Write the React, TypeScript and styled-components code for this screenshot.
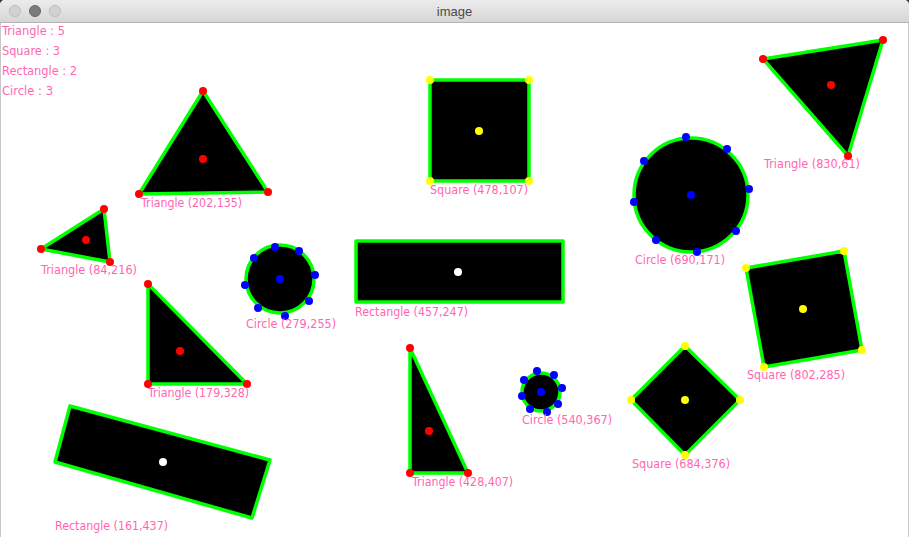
import React from "react";
import styled, { createGlobalStyle } from "styled-components";

const Global = createGlobalStyle`
  html, body { margin: 0; padding: 0; background: #3b3548; overflow: hidden; }
  #root { width: 909px; height: 537px; }
`;

const Window = styled.div`
  width: 909px;
  height: 537px;
  display: flex;
  flex-direction: column;
  background: #ffffff;
  border-radius: 5px 5px 0 0;
  overflow: hidden;
  box-sizing: border-box;
`;

const TitleBar = styled.div`
  height: 22px;
  flex: 0 0 22px;
  border-bottom: 1px solid #b4b4b4;
  background: linear-gradient(#ececec, #d6d6d6);
  display: flex;
  align-items: center;
  position: relative;
  padding-left: 9px;
  box-sizing: content-box;
`;

const Lights = styled.div`
  display: flex;
  gap: 8px;
`;

const Light = styled.span<{ $dark?: boolean }>`
  width: 12px;
  height: 12px;
  border-radius: 50%;
  box-sizing: border-box;
  background: ${(p) => (p.$dark ? "#7b7b7b" : "#d2d2d2")};
  border: 1px solid ${(p) => (p.$dark ? "#666666" : "#bcbcbc")};
`;

const Title = styled.div`
  position: absolute;
  left: 0;
  right: 0;
  text-align: center;
  font-family: "Liberation Sans", Arial, sans-serif;
  font-size: 13px;
  color: #4a4a4a;
  pointer-events: none;
`;

const Canvas = styled.div`
  flex: 1;
  display: flex;
  border-left: 1px solid #c8c8c8;
  border-right: 1px solid #c8c8c8;
  background: #ffffff;
`;

const Label = styled.text`
  font-family: "DejaVu Sans", "Liberation Sans", sans-serif;
  font-size: 12px;
  fill: #ff66b2;
`;

type Pt = [number, number];

const GREEN = "#00ff00";

const Dot = ({ p, c }: { p: Pt; c: string }) => <circle cx={p[0]} cy={p[1]} r={4} fill={c} />;

const Poly = ({ pts, dots, dotColor, center, centerColor }: { pts: Pt[]; dots?: boolean; dotColor: string; center: Pt; centerColor: string }) => (
  <g>
    <polygon points={pts.map((p) => p.join(",")).join(" ")} fill="#000" stroke={GREEN} strokeWidth={3.5} strokeLinejoin="round" />
    {dots !== false && pts.map((p, i) => <Dot key={i} p={p} c={dotColor} />)}
    <Dot p={center} c={centerColor} />
  </g>
);

const Circ = ({ c, r, dots }: { c: Pt; r: number; dots: Pt[] }) => (
  <g>
    <circle cx={c[0]} cy={c[1]} r={r} fill="#000" stroke={GREEN} strokeWidth={3.5} />
    {dots.map((p, i) => <Dot key={i} p={p} c="#0000ff" />)}
    <Dot p={c} c="#0000ff" />
  </g>
);

const labels: { t: string; x: number; y: number; w: number }[] = [
  { t: "Triangle : 5", x: 2, y: 35, w: 63 },
  { t: "Square : 3", x: 2, y: 55, w: 58 },
  { t: "Rectangle : 2", x: 2, y: 75, w: 75 },
  { t: "Circle : 3", x: 2, y: 95, w: 51 },
  { t: "Triangle (202,135)", x: 141, y: 207, w: 101 },
  { t: "Triangle (84,216)", x: 41, y: 274, w: 96 },
  { t: "Circle (279,255)", x: 246, y: 328, w: 90 },
  { t: "Rectangle (457,247)", x: 355, y: 316, w: 113 },
  { t: "Rectangle (161,437)", x: 55, y: 530, w: 113 },
  { t: "Circle (540,367)", x: 522, y: 424, w: 90 },
  { t: "Circle (690,171)", x: 635, y: 264, w: 90 },
  { t: "Square (802,285)", x: 747, y: 379, w: 98 },
  { t: "Triangle (830,61)", x: 764, y: 168, w: 96 },
  { t: "Triangle (428,407)", x: 412, y: 486, w: 101 },
  { t: "Square (478,107)", x: 430, y: 194, w: 98 },
  { t: "Square (684,376)", x: 632, y: 468, w: 98 },
  { t: "Triangle (179,328)", x: 148, y: 397, w: 101 },
];

export default function App() {
  return (
    <>
      <Global />
      <Window>
        <TitleBar>
          <Lights>
            <Light />
            <Light $dark />
            <Light />
          </Lights>
          <Title>image</Title>
        </TitleBar>
        <Canvas>
          <svg width={907} height={514} viewBox="1 23 907 514">
            <Poly pts={[[203, 91], [139, 194], [268, 192]]} dotColor="#ff0000" center={[203, 159]} centerColor="#ff0000" />
            <Poly pts={[[104, 209], [41, 249], [110, 262]]} dotColor="#ff0000" center={[86, 240]} centerColor="#ff0000" />
            <Poly pts={[[763, 59], [883, 40], [848, 156]]} dotColor="#ff0000" center={[831, 85]} centerColor="#ff0000" />
            <Poly pts={[[148, 284], [148, 384], [247, 384]]} dotColor="#ff0000" center={[180, 351]} centerColor="#ff0000" />
            <Poly pts={[[410, 348], [410, 473], [468, 473]]} dotColor="#ff0000" center={[429, 431]} centerColor="#ff0000" />
            <Poly pts={[[430, 80], [529, 80], [529, 181], [430, 181]]} dotColor="#ffff00" center={[479, 131]} centerColor="#ffff00" />
            <Poly pts={[[746, 268], [844, 251], [862, 350], [764, 367]]} dotColor="#ffff00" center={[803, 309]} centerColor="#ffff00" />
            <Poly pts={[[685, 346], [740, 400], [685, 455], [631, 400]]} dotColor="#ffff00" center={[685, 400]} centerColor="#ffff00" />
            <Poly pts={[[356, 241], [563, 241], [563, 302], [356, 302]]} dots={false} dotColor="#fff" center={[458, 272]} centerColor="#ffffff" />
            <Poly pts={[[70, 406], [270, 460], [252, 518], [55, 462]]} dots={false} dotColor="#fff" center={[163, 462]} centerColor="#ffffff" />
            <Circ c={[280, 279]} r={34} dots={[[275, 247], [299, 251], [254, 258], [315, 275], [245, 285], [309, 301], [258, 308], [285, 316]]} />
            <Circ c={[541, 392]} r={19} dots={[[537, 371], [554, 375], [524, 380], [562, 388], [522, 396], [558, 404], [530, 409], [547, 412]]} />
            <Circ c={[691, 195]} r={57} dots={[[686, 137], [727, 149], [644, 161], [749, 189], [634, 202], [736, 231], [656, 240], [697, 252]]} />
            {labels.map((l) => (
              <Label key={l.t} x={l.x} y={l.y} textLength={l.w} lengthAdjust="spacingAndGlyphs">
                {l.t}
              </Label>
            ))}
          </svg>
        </Canvas>
      </Window>
    </>
  );
}
